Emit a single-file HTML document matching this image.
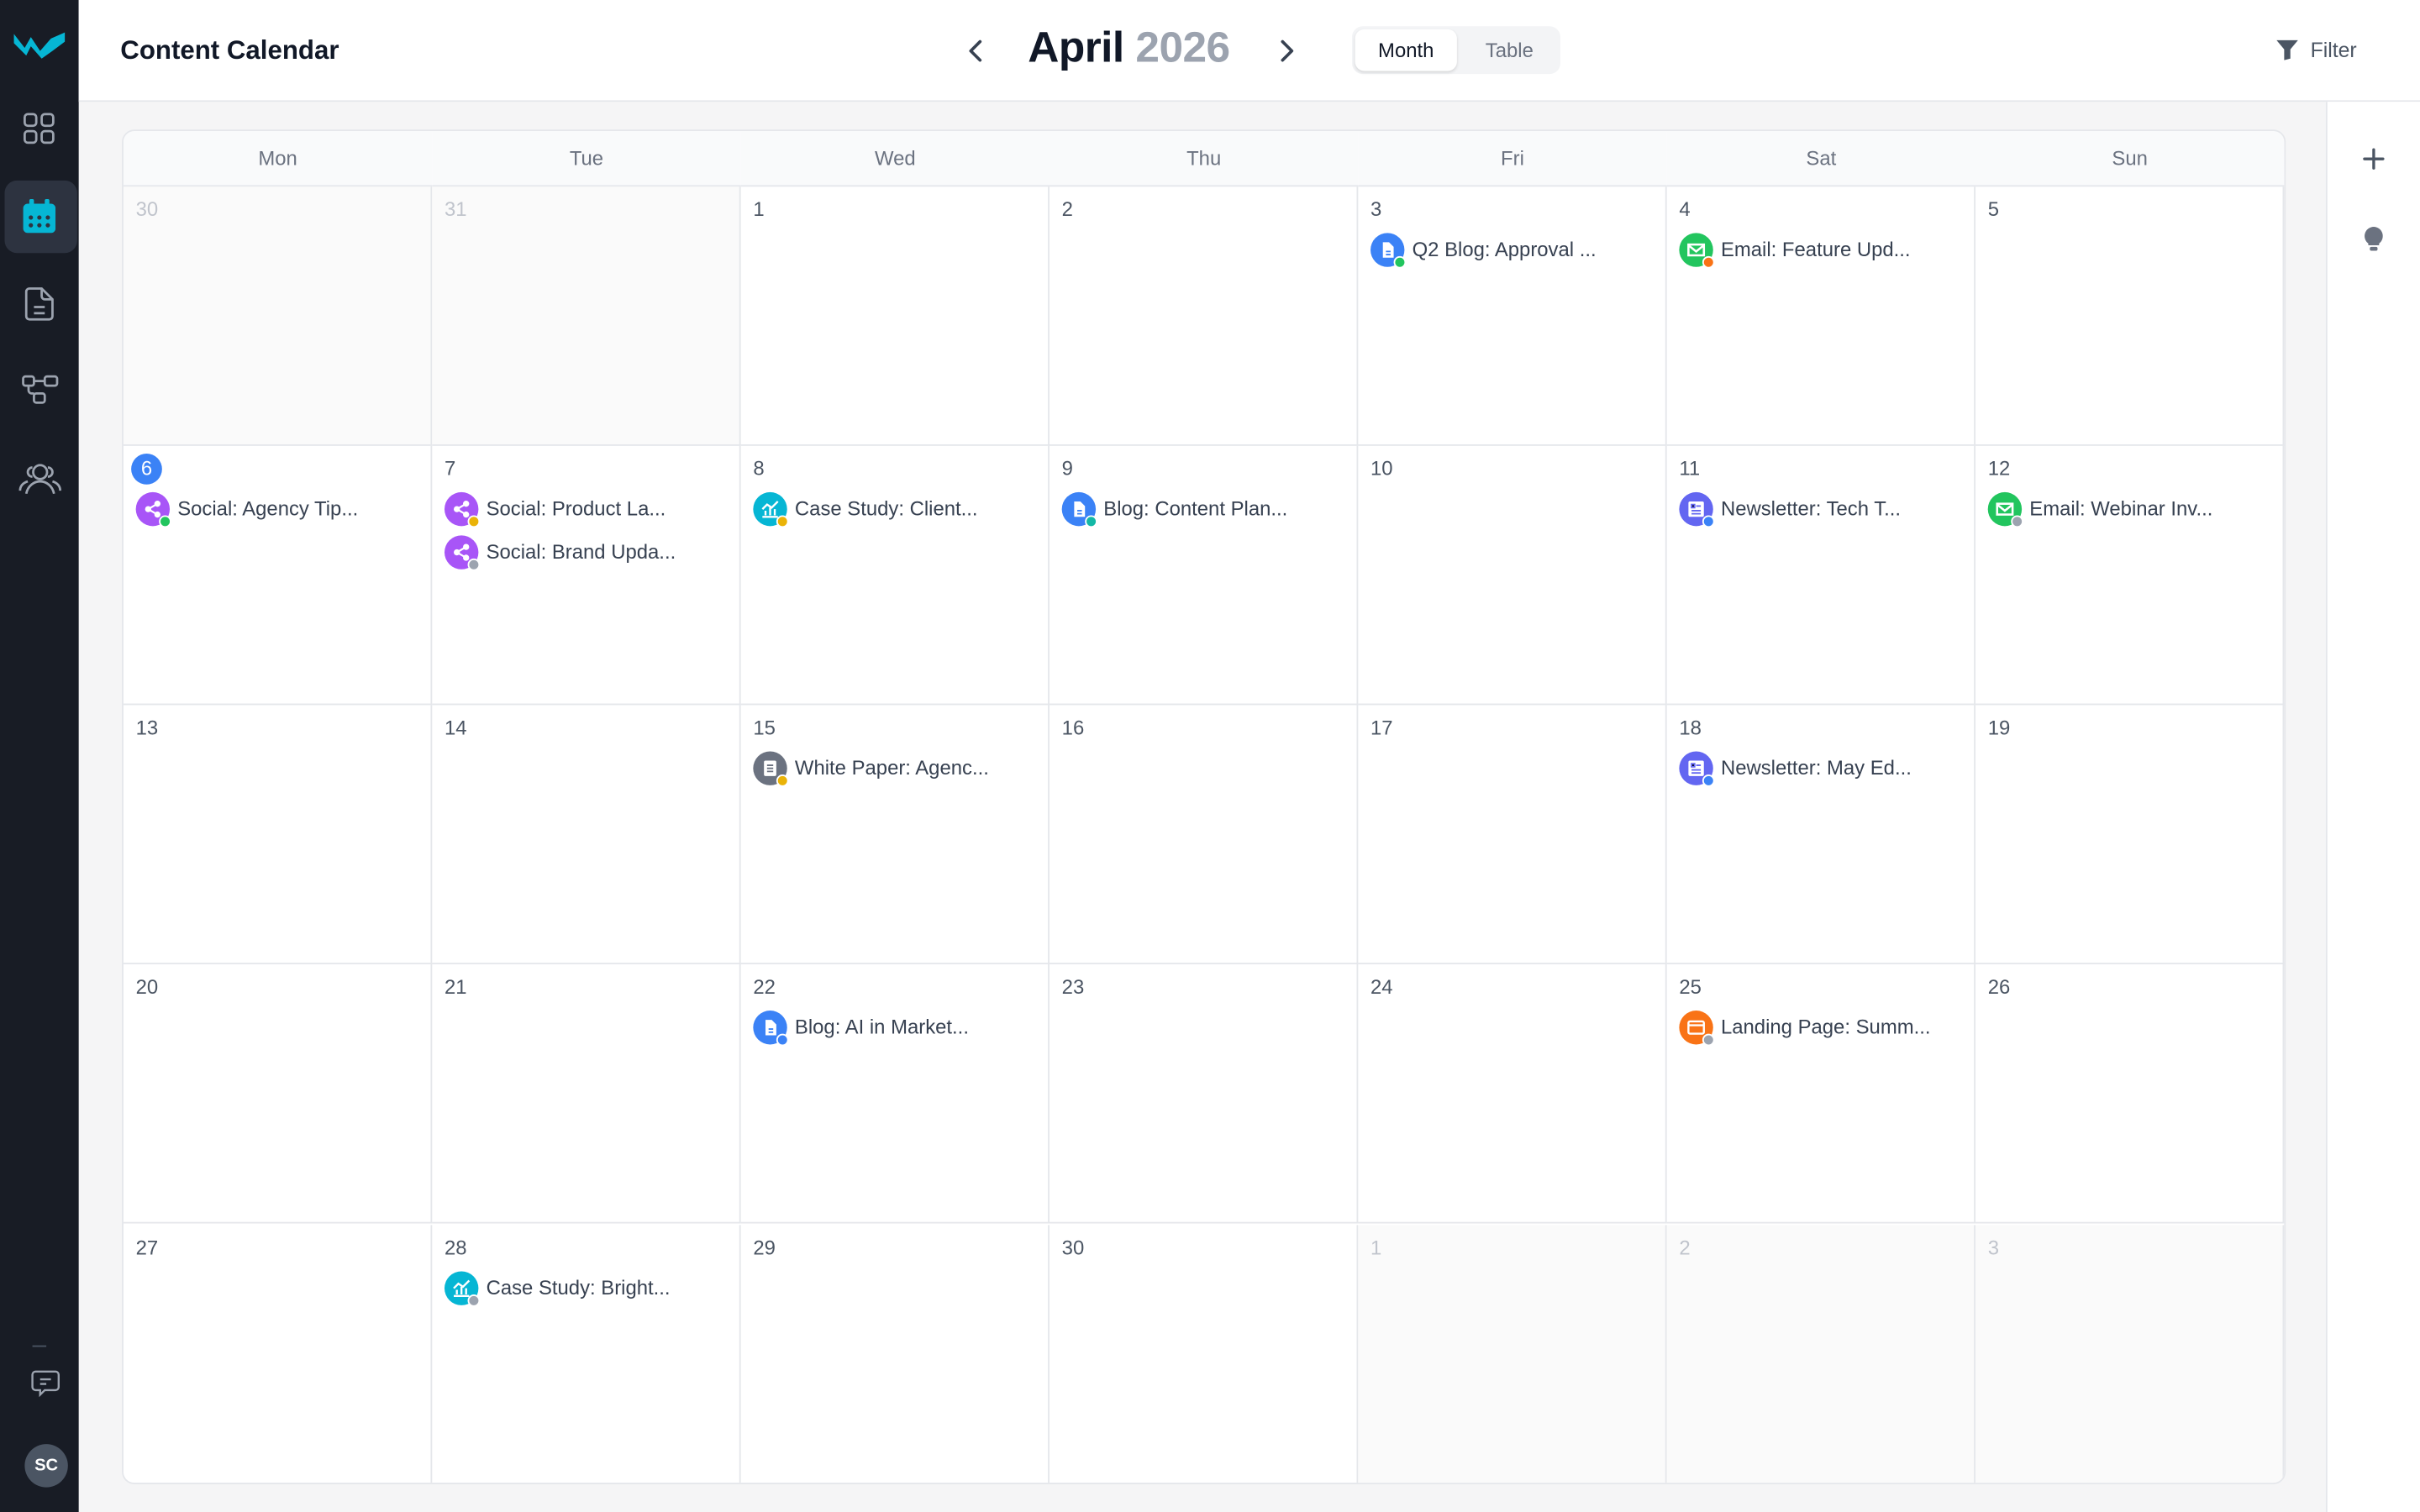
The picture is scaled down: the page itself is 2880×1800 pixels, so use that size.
<!DOCTYPE html>
<html><head><meta charset="utf-8"><style>
*{box-sizing:border-box;margin:0;padding:0}
html,body{width:2880px;height:1800px;overflow:hidden;background:#f5f5f6}
#w{position:absolute;left:0;top:0;width:1568px;height:980px;transform:scale(1.836735);transform-origin:0 0;font-family:"Liberation Sans",sans-serif;background:#f5f5f6}
.a{position:absolute}
#side{left:0;top:0;width:51px;height:980px;background:#181c25}
#hdr{left:51px;top:0;width:1517px;height:66px;background:#fff;border-bottom:1px solid #e5e7eb}
#rp{left:1507px;top:66px;width:61px;height:914px;background:#fff;border-left:1px solid #e5e7eb}
#card{left:79px;top:84px;width:1402px;height:878px;background:#fff;border:1px solid #e5e7eb;border-radius:8px;overflow:hidden}
.dh{top:0;height:36px;width:200px;background:#f9fafb;border-bottom:1px solid #e5e7eb;text-align:center;line-height:36px;font-size:13px;color:#6b7280}
.c{width:200px;height:168px;border-right:1px solid #e5e7eb;border-bottom:1px solid #e5e7eb}
.o{background:#fafafa}
.d{position:absolute;left:8px;top:7px;font-size:13px;color:#4b5563}
.o .d{color:#c0c4cc}
.e{position:absolute;left:8px;height:22px;font-size:13px;color:#374151;line-height:22px;padding-left:27px;white-space:nowrap}
.i{position:absolute;left:0;top:0;width:22px;height:22px;border-radius:50%}
.i svg{position:absolute;left:5px;top:5px}
.s{position:absolute;left:15px;top:15px;width:8px;height:8px;border-radius:50%;border:1px solid #fff}
.bl{background:#3b82f6}.em{background:#22c55e}.so{background:#a855f7}.cs{background:#06b6d4}.nw{background:#6366f1}.wp{background:#6b7280}.lp{background:#f97316}
.g{background:#22c55e}.or{background:#f97316}.y{background:#eab308}.gr{background:#9ca3af}.b{background:#3b82f6}.t{background:#14b8a6}
</style></head><body><div id="w">
<div id="side" class="a">
<svg class="a" style="left:9px;top:19px" width="34" height="20" viewBox="0 0 34 20"><path d="M0 3 L7 12 L11 5 L17 14 L24 6 L33 2 L33 8 L25 14 L18 19 L11 11 L8 17 L0 9Z" fill="#06b6d4"/></svg>
<svg class="a" style="left:15px;top:73px" width="21" height="21" viewBox="0 0 21 21" fill="none" stroke="#9ca3af" stroke-width="1.5"><rect x="1" y="1" width="7.5" height="7.5" rx="2"/><rect x="12" y="1" width="7.5" height="7.5" rx="2"/><rect x="1" y="12" width="7.5" height="7.5" rx="2"/><rect x="12" y="12" width="7.5" height="7.5" rx="2"/></svg>
<div class="a" style="left:3px;top:117px;width:47px;height:47px;border-radius:8px;background:#2d3340"></div>
<svg class="a" style="left:15px;top:129px" width="21" height="22" viewBox="0 0 21 22"><rect x="0" y="3" width="21" height="19" rx="3" fill="#06b6d4"/><rect x="4" y="0" width="3" height="5" rx="1" fill="#06b6d4"/><rect x="14" y="0" width="3" height="5" rx="1" fill="#06b6d4"/><g fill="#2d3340"><circle cx="5" cy="12" r="1.4"/><circle cx="10.5" cy="12" r="1.4"/><circle cx="16" cy="12" r="1.4"/><circle cx="5" cy="17" r="1.4"/><circle cx="10.5" cy="17" r="1.4"/><circle cx="16" cy="17" r="1.4"/></g></svg>
<svg class="a" style="left:16px;top:186px" width="19" height="22" viewBox="0 0 19 22" fill="none" stroke="#9ca3af" stroke-width="1.5"><path d="M3 1h8l7 7v11a2 2 0 0 1-2 2H3a2 2 0 0 1-2-2V3a2 2 0 0 1 2-2z"/><path d="M11 1v5a2 2 0 0 0 2 2h5M6 13h7M6 17h7"/></svg>
<svg class="a" style="left:14px;top:243px" width="24" height="20" viewBox="0 0 24 20" fill="none" stroke="#9ca3af" stroke-width="1.5"><rect x="1" y="1" width="7" height="6" rx="1.5"/><rect x="15" y="1" width="8" height="6" rx="1.5"/><rect x="8" y="12" width="7" height="6" rx="1.5"/><path d="M8 4h7M4.5 7v3a2 2 0 0 0 2 2h1.5"/></svg>
<svg class="a" style="left:12px;top:299px" width="28" height="22" viewBox="0 0 28 22" fill="none" stroke="#9ca3af" stroke-width="1.5"><circle cx="14" cy="7" r="4.5"/><path d="M5 21c1-5 5-8 9-8s8 3 9 8M9 4a3 3 0 0 0 0 6M19 4a3 3 0 0 1 0 6M1 19c0-3 2-5 5-6M27 19c0-3-2-5-5-6"/></svg>
<div class="a" style="left:21px;top:872px;width:9px;height:1px;background:#4b5563"></div>
<svg class="a" style="left:20px;top:888px" width="19" height="18" viewBox="0 0 19 18" fill="none" stroke="#9ca3af" stroke-width="1.3"><path d="M3 1h13a2 2 0 0 1 2 2v8a2 2 0 0 1-2 2H9l-3 3v-3H3a2 2 0 0 1-2-2V3a2 2 0 0 1 2-2z"/><path d="M6 6h7M6 9h4"/></svg>
<div class="a" style="left:16px;top:936px;width:28px;height:28px;border-radius:50%;background:#4b5563;color:#fff;font-size:11px;font-weight:bold;text-align:center;line-height:28px">SC</div>
</div>
<div id="hdr" class="a">
<div class="a" style="left:27px;top:23px;font-size:17px;font-weight:bold;color:#111827">Content Calendar</div>
<svg class="a" style="left:576px;top:25px" width="10" height="16" viewBox="0 0 10 16"><path d="M8 2L2 8l6 6" fill="none" stroke="#374151" stroke-width="2" stroke-linecap="round" stroke-linejoin="round"/></svg>
<div class="a" style="left:615px;top:15px;font-size:28px;font-weight:bold;color:#111827;letter-spacing:-0.3px">April <span style="color:#9ca3af">2026</span></div>
<svg class="a" style="left:778px;top:25px" width="10" height="16" viewBox="0 0 10 16"><path d="M2 2l6 6-6 6" fill="none" stroke="#374151" stroke-width="2" stroke-linecap="round" stroke-linejoin="round"/></svg>
<div class="a" style="left:825px;top:17px;width:135px;height:31px;border-radius:7px;background:#f3f4f6"></div>
<div class="a" style="left:827px;top:19px;width:66px;height:27px;border-radius:6px;background:#fff;box-shadow:0 1px 2px rgba(0,0,0,.12);text-align:center;line-height:27px;font-size:13px;color:#111827">Month</div>
<div class="a" style="left:896px;top:19px;width:62px;height:27px;text-align:center;line-height:27px;font-size:13px;color:#6b7280">Table</div>
<svg class="a" style="left:1424px;top:26px" width="14" height="13" viewBox="0 0 14 13"><path d="M0 0h14L9 6v6L5 13V6Z" fill="#4b5563"/></svg>
<div class="a" style="left:1446px;top:25px;font-size:13.5px;color:#4b5563">Filter</div>
</div>
<div id="rp" class="a">
<svg class="a" style="left:23px;top:30px" width="14" height="14" viewBox="0 0 14 14"><path d="M7 1v12M1 7h12" stroke="#4b5563" stroke-width="1.8" stroke-linecap="round"/></svg>
<svg class="a" style="left:24px;top:81px" width="12" height="17" viewBox="0 0 12 17"><path d="M6 0a6 6 0 0 0-3.5 10.8V12h7v-1.2A6 6 0 0 0 6 0z" fill="#6b7280"/><rect x="3.5" y="13" width="5" height="2.5" rx="1" fill="#6b7280"/></svg>
</div>
<div id="card" class="a">
<div class="a dh" style="left:0">Mon</div><div class="a dh" style="left:200px">Tue</div><div class="a dh" style="left:400px">Wed</div><div class="a dh" style="left:600px">Thu</div><div class="a dh" style="left:800px">Fri</div><div class="a dh" style="left:1000px">Sat</div><div class="a dh" style="left:1200px">Sun</div>

<div class="a c o" style="left:0;top:36px"><div class="d">30</div></div>
<div class="a c o" style="left:200px;top:36px"><div class="d">31</div></div>
<div class="a c" style="left:400px;top:36px"><div class="d">1</div></div>
<div class="a c" style="left:600px;top:36px"><div class="d">2</div></div>
<div class="a c" style="left:800px;top:36px"><div class="d">3</div><div class="e" style="top:30px"><div class="i bl"><svg width="12" height="12" viewBox="0 0 12 12"><path d="M3 1h4l3 3v7H3z" fill="#fff"/><path d="M5 7h3M5 9h3" stroke="#3b82f6"/></svg></div><div class="s g"></div>Q2 Blog: Approval ...</div></div>
<div class="a c" style="left:1000px;top:36px"><div class="d">4</div><div class="e" style="top:30px"><div class="i em"><svg width="12" height="12" viewBox="0 0 12 12"><rect x="1" y="2.5" width="10" height="7" fill="none" stroke="#fff" stroke-width="1.4"/><path d="M1 3l5 4 5-4" fill="none" stroke="#fff" stroke-width="1.4"/></svg></div><div class="s or"></div>Email: Feature Upd...</div></div>
<div class="a c" style="left:1200px;top:36px"><div class="d">5</div></div>

<div class="a c" style="left:0;top:204px"><div class="d" style="left:5px;top:5px;width:20px;height:20px;border-radius:50%;background:#3b82f6;color:#fff;text-align:center;line-height:20px">6</div><div class="e" style="top:30px"><div class="i so"><svg width="12" height="12" viewBox="0 0 12 12" fill="#fff"><circle cx="9" cy="2.5" r="2"/><circle cx="3" cy="6" r="2"/><circle cx="9" cy="9.5" r="2"/><path d="M9 2.5L3 6l6 3.5" stroke="#fff" stroke-width="1.2" fill="none"/></svg></div><div class="s g"></div>Social: Agency Tip...</div></div>
<div class="a c" style="left:200px;top:204px"><div class="d">7</div><div class="e" style="top:30px"><div class="i so"><svg width="12" height="12" viewBox="0 0 12 12" fill="#fff"><circle cx="9" cy="2.5" r="2"/><circle cx="3" cy="6" r="2"/><circle cx="9" cy="9.5" r="2"/><path d="M9 2.5L3 6l6 3.5" stroke="#fff" stroke-width="1.2" fill="none"/></svg></div><div class="s y"></div>Social: Product La...</div><div class="e" style="top:58px"><div class="i so"><svg width="12" height="12" viewBox="0 0 12 12" fill="#fff"><circle cx="9" cy="2.5" r="2"/><circle cx="3" cy="6" r="2"/><circle cx="9" cy="9.5" r="2"/><path d="M9 2.5L3 6l6 3.5" stroke="#fff" stroke-width="1.2" fill="none"/></svg></div><div class="s gr"></div>Social: Brand Upda...</div></div>
<div class="a c" style="left:400px;top:204px"><div class="d">8</div><div class="e" style="top:30px"><div class="i cs"><svg width="12" height="12" viewBox="0 0 12 12" fill="none" stroke="#fff" stroke-width="1.3"><path d="M1 11h10M3 10V7M6 10V5M9 10V6M1 6l3-3 3 2 4-4"/></svg></div><div class="s y"></div>Case Study: Client...</div></div>
<div class="a c" style="left:600px;top:204px"><div class="d">9</div><div class="e" style="top:30px"><div class="i bl"><svg width="12" height="12" viewBox="0 0 12 12"><path d="M3 1h4l3 3v7H3z" fill="#fff"/><path d="M5 7h3M5 9h3" stroke="#3b82f6"/></svg></div><div class="s t"></div>Blog: Content Plan...</div></div>
<div class="a c" style="left:800px;top:204px"><div class="d">10</div></div>
<div class="a c" style="left:1000px;top:204px"><div class="d">11</div><div class="e" style="top:30px"><div class="i nw"><svg width="12" height="12" viewBox="0 0 12 12"><rect x="1" y="1" width="10" height="10" rx="1" fill="#fff"/><path d="M3 3h2v2H3zM6 4h3M3 7h6M3 9h6" stroke="#6366f1"/></svg></div><div class="s b"></div>Newsletter: Tech T...</div></div>
<div class="a c" style="left:1200px;top:204px"><div class="d">12</div><div class="e" style="top:30px"><div class="i em"><svg width="12" height="12" viewBox="0 0 12 12"><rect x="1" y="2.5" width="10" height="7" fill="none" stroke="#fff" stroke-width="1.4"/><path d="M1 3l5 4 5-4" fill="none" stroke="#fff" stroke-width="1.4"/></svg></div><div class="s gr"></div>Email: Webinar Inv...</div></div>

<div class="a c" style="left:0;top:372px"><div class="d">13</div></div>
<div class="a c" style="left:200px;top:372px"><div class="d">14</div></div>
<div class="a c" style="left:400px;top:372px"><div class="d">15</div><div class="e" style="top:30px"><div class="i wp"><svg width="12" height="12" viewBox="0 0 12 12"><rect x="2" y="1" width="8" height="10" rx="1" fill="#fff"/><path d="M4 4h4M4 6h4M4 8h4" stroke="#6b7280"/></svg></div><div class="s y"></div>White Paper: Agenc...</div></div>
<div class="a c" style="left:600px;top:372px"><div class="d">16</div></div>
<div class="a c" style="left:800px;top:372px"><div class="d">17</div></div>
<div class="a c" style="left:1000px;top:372px"><div class="d">18</div><div class="e" style="top:30px"><div class="i nw"><svg width="12" height="12" viewBox="0 0 12 12"><rect x="1" y="1" width="10" height="10" rx="1" fill="#fff"/><path d="M3 3h2v2H3zM6 4h3M3 7h6M3 9h6" stroke="#6366f1"/></svg></div><div class="s b"></div>Newsletter: May Ed...</div></div>
<div class="a c" style="left:1200px;top:372px"><div class="d">19</div></div>

<div class="a c" style="left:0;top:540px"><div class="d">20</div></div>
<div class="a c" style="left:200px;top:540px"><div class="d">21</div></div>
<div class="a c" style="left:400px;top:540px"><div class="d">22</div><div class="e" style="top:30px"><div class="i bl"><svg width="12" height="12" viewBox="0 0 12 12"><path d="M3 1h4l3 3v7H3z" fill="#fff"/><path d="M5 7h3M5 9h3" stroke="#3b82f6"/></svg></div><div class="s b"></div>Blog: AI in Market...</div></div>
<div class="a c" style="left:600px;top:540px"><div class="d">23</div></div>
<div class="a c" style="left:800px;top:540px"><div class="d">24</div></div>
<div class="a c" style="left:1000px;top:540px"><div class="d">25</div><div class="e" style="top:30px"><div class="i lp"><svg width="12" height="12" viewBox="0 0 12 12"><rect x="1" y="2" width="10" height="8" rx="1" fill="none" stroke="#fff" stroke-width="1.3"/><path d="M1 4.5h10" stroke="#fff" stroke-width="1.3"/></svg></div><div class="s gr"></div>Landing Page: Summ...</div></div>
<div class="a c" style="left:1200px;top:540px"><div class="d">26</div></div>

<div class="a c" style="left:0;top:709px;height:169px"><div class="d">27</div></div>
<div class="a c" style="left:200px;top:709px;height:169px"><div class="d">28</div><div class="e" style="top:30px"><div class="i cs"><svg width="12" height="12" viewBox="0 0 12 12" fill="none" stroke="#fff" stroke-width="1.3"><path d="M1 11h10M3 10V7M6 10V5M9 10V6M1 6l3-3 3 2 4-4"/></svg></div><div class="s gr"></div>Case Study: Bright...</div></div>
<div class="a c" style="left:400px;top:709px;height:169px"><div class="d">29</div></div>
<div class="a c" style="left:600px;top:709px;height:169px"><div class="d">30</div></div>
<div class="a c o" style="left:800px;top:709px;height:169px"><div class="d">1</div></div>
<div class="a c o" style="left:1000px;top:709px;height:169px"><div class="d">2</div></div>
<div class="a c o" style="left:1200px;top:709px;height:169px"><div class="d">3</div></div>
</div>
</div></body></html>
